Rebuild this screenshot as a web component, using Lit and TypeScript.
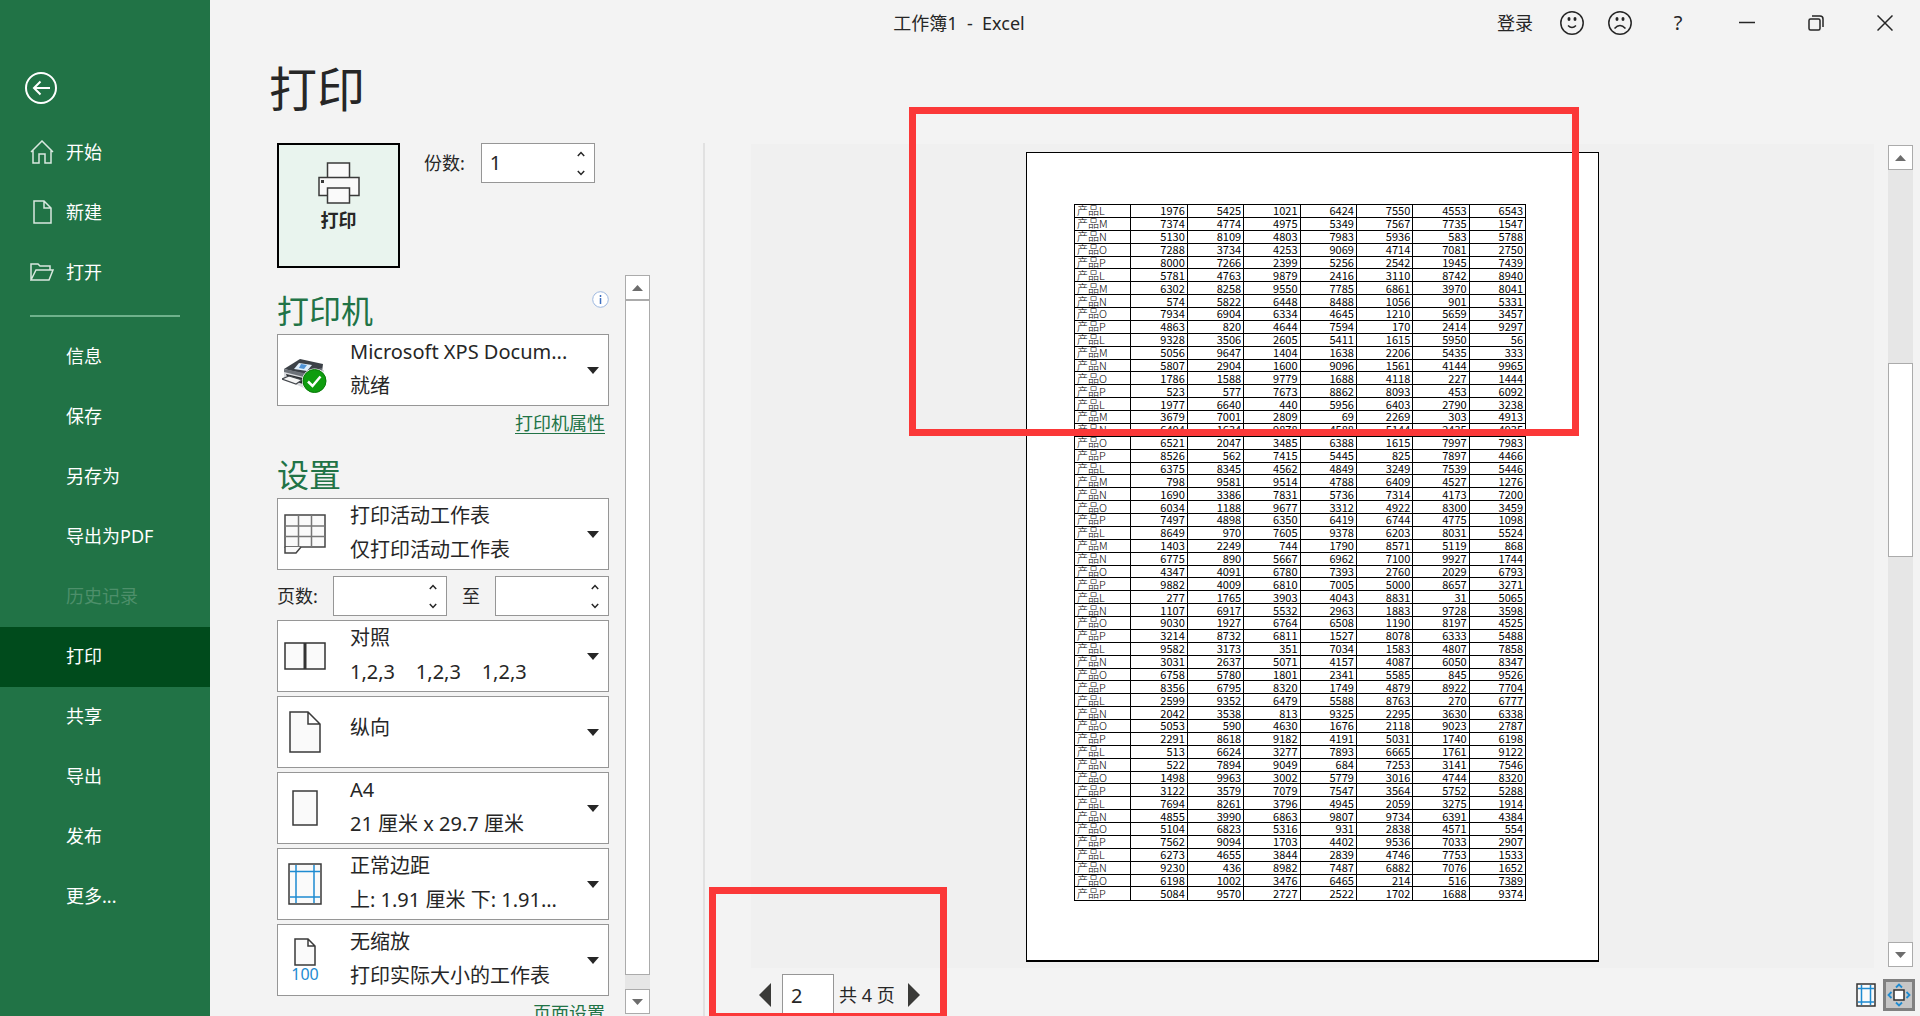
import { LitElement, html, svg, css, nothing, type TemplateResult } from "lit";
import { customElement, property } from "lit/decorators.js";
import { classMap } from "lit/directives/class-map.js";

const SHEET = `
L 1976 5425 1021 6424 7550 4553 6543
M 7374 4774 4975 5349 7567 7735 1547
N 5130 8109 4803 7983 5936 583 5788
O 7288 3734 4253 9069 4714 7081 2750
P 8000 7266 2399 5256 2542 1945 7439
L 5781 4763 9879 2416 3110 8742 8940
M 6302 8258 9550 7785 6861 3970 8041
N 574 5822 6448 8488 1056 901 5331
O 7934 6904 6334 4645 1210 5659 3457
P 4863 820 4644 7594 170 2414 9297
L 9328 3506 2605 5411 1615 5950 56
M 5056 9647 1404 1638 2206 5435 333
N 5807 2904 1600 9096 1561 4144 9965
O 1786 1588 9779 1688 4118 227 1444
P 523 577 7673 8862 8093 453 6092
L 1977 6640 440 5956 6403 2790 3238
M 3679 7001 2809 69 2269 303 4913
N 6404 1634 9878 4588 5144 2435 4935
O 6521 2047 3485 6388 1615 7997 7983
P 8526 562 7415 5445 825 7897 4466
L 6375 8345 4562 4849 3249 7539 5446
M 798 9581 9514 4788 6409 4527 1276
N 1690 3386 7831 5736 7314 4173 7200
O 6034 1188 9677 3312 4922 8300 3459
P 7497 4898 6350 6419 6744 4775 1098
L 8649 970 7605 9378 6203 8031 5524
M 1403 2249 744 1790 8571 5119 868
N 6775 890 5667 6962 7100 9927 1744
O 4347 4091 6780 7393 2760 2029 6793
P 9882 4009 6810 7005 5000 8657 3271
L 277 1765 3903 4043 8831 31 5065
N 1107 6917 5532 2963 1883 9728 3598
O 9030 1927 6764 6508 1190 8197 4525
P 3214 8732 6811 1527 8078 6333 5488
L 9582 3173 351 7034 1583 4807 7858
N 3031 2637 5071 4157 4087 6050 8347
O 6758 5780 1801 2341 5585 845 9526
P 8356 6795 8320 1749 4879 8922 7704
L 2599 9352 6479 5588 8763 270 6777
N 2042 3538 813 9325 2295 3630 6338
O 5053 590 4630 1676 2118 9023 2787
P 2291 8618 9182 4191 5031 1740 6198
L 513 6624 3277 7893 6665 1761 9122
N 522 7894 9049 684 7253 3141 7546
O 1498 9963 3002 5779 3016 4744 8320
P 3122 3579 7079 7547 3564 5752 5288
L 7694 8261 3796 4945 2059 3275 1914
N 4855 3990 6863 9807 9734 6391 4384
O 5104 6823 5316 931 2838 4571 554
P 7562 9094 1703 4402 9536 7033 2907
L 6273 4655 3844 2839 4746 7753 1533
N 9230 436 8982 7487 6882 7076 1652
O 6198 1002 3476 6465 214 516 7389
P 5084 9570 2727 2522 1702 1688 9374`
  .trim()
  .split("\n")
  .map((line) => line.split(" "));

const icon = (w: number, h: number, body: TemplateResult) =>
  html`<svg width=${w} height=${h} viewBox="0 0 ${w} ${h}" fill="none" aria-hidden="true">${body}</svg>`;

const icons = {
  back: icon(32, 32, svg`<g stroke="#fff" stroke-width="2"><circle cx="16" cy="16" r="15"/><path d="M25 16H9M15.500 9.500L9 16l6.500 6.500"/></g>`),
  home: icon(24, 24, svg`<path d="M1 12L12 1l11 11M3 10v13h6v-9h6v9h6V10" stroke="#d9e8df" stroke-width="1.500"/>`),
  file: icon(24, 24, svg`<path d="M4 1h10l7 7v15H4zM14 1v7h7" stroke="#d9e8df" stroke-width="1.500"/>`),
  folder: icon(24, 24, svg`<path d="M1 20V4h7l2 2h10v4M1 20L6 10h17l-4 10z" stroke="#d9e8df" stroke-width="1.500"/>`),
  smile: icon(24, 24, svg`<circle cx="12" cy="12" r="11.200" stroke="#262626" stroke-width="1.500"/><g fill="#262626"><ellipse cx="9" cy="8" rx="1.500" ry="2"/><ellipse cx="15" cy="8" rx="1.500" ry="2"/></g><path d="M8 14.500q4 4 8 0" stroke="#262626" stroke-width="1.500"/>`),
  frown: icon(24, 24, svg`<circle cx="12" cy="12" r="11.200" stroke="#262626" stroke-width="1.500"/><g fill="#262626"><ellipse cx="9" cy="8" rx="1.500" ry="2"/><ellipse cx="15" cy="8" rx="1.500" ry="2"/></g><path d="M6.500 17.500q5.500-6 11 0" stroke="#262626" stroke-width="1.500"/>`),
  minimize: icon(16, 16, svg`<path d="M0 7.500h16" stroke="#262626" stroke-width="1.500"/>`),
  restore: icon(16, 16, svg`<g stroke="#262626" stroke-width="1.500"><rect x="1" y="4" width="11" height="11" rx="1.500"/><path d="M4 1h8q3 0 3 3v8"/></g>`),
  close: icon(16, 16, svg`<path d="M.5.5l15 15M15.500.5l-15 15" stroke="#262626" stroke-width="1.500"/>`),
  print: icon(42, 42, svg`<g stroke="#3a3a3a" stroke-width="1.500" fill="#fafafa"><path d="M9.500 1h22v15h-22z"/><path d="M1 15.500h40v18H1z"/><path d="M9.500 26h22v15h-22z"/></g><path d="M3 18h3v3H3z" fill="#3a3a3a"/>`),
  info: icon(17, 17, svg`<circle cx="8.500" cy="8.500" r="7.800" fill="#fff" stroke="#9db8e0"/><path d="M8.500 7v6M8.500 4v2" stroke="#3f6fc0" stroke-width="1.500"/>`),
  device: icon(46, 50, svg`<g transform="translate(0 13)"><path d="M2 12l40 0v11L24 31 2 21z" fill="#d8dadd"/><path d="M2 11L18 1l23 5-1 8-17 2z" fill="#3c4147"/><path d="M2 11l20 4 18-5v3l-18 6L2 14z" fill="#6c7178"/><path d="M17 5l13 2-5 6-13-2z" fill="#dfeefb"/><path d="M19 6l6 1-3 4-5-1z" fill="#4f93d6"/><path d="M4 16l17 4v6L6 21z" fill="#25282c"/><path d="M7 18L0 21l14 5 6-4z" fill="#f5f5f5" stroke="#44484d" stroke-width="1.200"/><circle cx="32.500" cy="23" r="12.500" fill="#fff"/><circle cx="32.500" cy="23" r="11.500" fill="#0f9d0f" stroke="#087a08"/><path d="M26 23.500l4.500 4.500 8-9.500" stroke="#fff" stroke-width="2.500"/></g>`),
  sheet: icon(42, 40, svg`<path d="M1 1h40v32H1z" fill="#fafafa" stroke="#444" stroke-width="1.500"/><path d="M14.500 1v32M27.500 1v32M1 12h40M1 22.500h40" stroke="#777" stroke-width="1.500"/><path d="M1 33v6h11l5-6" fill="#fafafa" stroke="#444" stroke-width="1.500"/>`),
  collate: icon(42, 28, svg`<path d="M1 1h40v26H1z" fill="#fafafa" stroke="#333" stroke-width="1.500"/><path d="M21 1v26" stroke="#333" stroke-width="3"/>`),
  portrait: icon(32, 42, svg`<path d="M1 1h18l12 12v28H1zM19 1v12h12" fill="#fafafa" stroke="#3a3a3a" stroke-width="1.500"/>`),
  paper: icon(26, 36, svg`<path d="M1 1h24v34H1z" fill="#fafafa" stroke="#3a3a3a" stroke-width="1.500"/>`),
  margins: icon(34, 42, svg`<path d="M1 1h32v40H1z" fill="#fafafa" stroke="#3a3a3a" stroke-width="1.500"/><path d="M8 2v38M26 2v38M2 8.500h30M2 34h30" stroke="#1e8bd1" stroke-width="1.500"/>`),
  scale: icon(22, 28, svg`<path d="M1 1h13l7 7v19H1zM14 1v7h7" fill="#fafafa" stroke="#3a3a3a" stroke-width="1.500"/>`),
  caret: icon(12, 7, svg`<path d="M0 0h12L6 7z" fill="#262626"/>`),
  up: icon(11, 6, svg`<path d="M0 6L5.500 0 11 6z" fill="#6d6d6d"/>`),
  down: icon(11, 6, svg`<path d="M0 0h11L5.500 6z" fill="#6d6d6d"/>`),
  spinUp: icon(8, 6, svg`<path d="M.8 5L4 1.500 7.200 5" stroke="#262626" stroke-width="1.500"/>`),
  spinDown: icon(8, 6, svg`<path d="M.8 1L4 4.500 7.200 1" stroke="#262626" stroke-width="1.500"/>`),
  prev: icon(12, 24, svg`<path d="M12 0v24L0 12z" fill="#3a3a38"/>`),
  next: icon(12, 24, svg`<path d="M0 0v24l12-12z" fill="#3a3a38"/>`),
  showMargins: icon(20, 24, svg`<path d="M1 1h18v22H1z" fill="#fafafa" stroke="#333" stroke-width="1.500"/><path d="M5.500 2v20M14.500 2v20M2 5.500h16M2 19h16" stroke="#1e8bd1" stroke-width="1.500"/>`),
  zoomPage: icon(24, 24, svg`<path d="M7 7h10v10H7z" fill="#fff" stroke="#333" stroke-width="1.500"/><path d="M9 4.500L12 1.500l3 3M9 19.500l3 3 3-3M4.500 9l-3 3 3 3M19.500 9l3 3-3 3" stroke="#1e8bd1" stroke-width="1.800"/>`),
};

const base = css`
  *, *::before, *::after { box-sizing: border-box; }
  button, input { font: inherit; color: inherit; margin: 0; border-radius: 0; }
  button { padding: 0; border: 0; background: none; cursor: pointer; }
  svg { display: block; flex: none; }
`;

@customElement("spin-box")
export class SpinBox extends LitElement {
  static styles = [base, css`
    :host { display: block; width: 114px; }
    .box { display: flex; height: 40px; border: 1px solid #969696; background: #fff; }
    .field { flex: 1; min-width: 0; border: 0; outline: 0; background: none; padding: 0 0 0 8px; font-size: 20px; }
    .steps { display: grid; grid-template-rows: 1fr 1fr; width: 26px; }
    .step { display: grid; place-items: center; }
  `];
  @property() label = "";
  @property() value = "";
  render() {
    return html`<div class="box">
      <input class="field" type="text" inputmode="numeric" aria-label=${this.label} .value=${this.value} />
      <span class="steps">
        <button class="step" aria-label="增加">${icons.spinUp}</button>
        <button class="step" aria-label="减少">${icons.spinDown}</button>
      </span>
    </div>`;
  }
}

@customElement("option-picker")
export class OptionPicker extends LitElement {
  static styles = [base, css`
    :host { display: block; }
    .picker { display: flex; align-items: center; width: 100%; height: 72px; border: 1px solid #969696; background: #fff; text-align: left; }
    .glyph { display: flex; flex-direction: column; align-items: center; width: 54px; flex: none; }
    .caption { color: #1e8bd1; font-size: 16px; line-height: 16px; }
    .lines { flex: 1; min-width: 0; padding: 0 0 2px 18px; font-size: 20px; line-height: 34px; }
    .line { display: block; white-space: pre; }
    .lines.single { padding-bottom: 8px; }
    .caret { padding-right: 9px; }
  `];
  @property({ attribute: false }) glyph: TemplateResult | typeof nothing = nothing;
  @property() caption = "";
  @property() name = "";
  @property() detail = "";
  render() {
    return html`<button class="picker" aria-haspopup="listbox">
      <span class="glyph">${this.glyph}${this.caption ? html`<span class="caption">${this.caption}</span>` : nothing}</span>
      <span class=${classMap({ lines: true, single: !this.detail })}>
        <span class="line">${this.name}</span>
        ${this.detail ? html`<span class="line">${this.detail}</span>` : nothing}
      </span>
      <span class="caret">${icons.caret}</span>
    </button>`;
  }
}

@customElement("scroll-rail")
export class ScrollRail extends LitElement {
  static styles = [base, css`
    :host { display: flex; flex-direction: column; width: 25px; flex: none; background: #e6e6e6; }
    .end { display: grid; place-items: center; height: 25px; flex: none; border: 1px solid #ababab; background: #fff; }
    .track { display: flex; flex-direction: column; flex: 1; }
    .thumb { border: 1px solid #ababab; background: #fff; }
  `];
  @property({ type: Number }) before = 0;
  @property({ type: Number }) size = 50;
  render() {
    return html`<button class="end" aria-label="向上滚动">${icons.up}</button>
      <div class="track">
        <div style="flex-grow:${this.before}"></div>
        <div class="thumb" style="flex-grow:${this.size}"></div>
        <div style="flex-grow:${100 - this.before - this.size}"></div>
      </div>
      <button class="end" aria-label="向下滚动">${icons.down}</button>`;
  }
}

interface NavItem { text: string; glyph?: TemplateResult; disabled?: boolean; current?: boolean; }

const primaryNav: NavItem[] = [
  { text: "开始", glyph: icons.home },
  { text: "新建", glyph: icons.file },
  { text: "打开", glyph: icons.folder },
];
const secondaryNav: NavItem[] = [
  { text: "信息" }, { text: "保存" }, { text: "另存为" }, { text: "导出为PDF" },
  { text: "历史记录", disabled: true }, { text: "打印", current: true },
  { text: "共享" }, { text: "导出" }, { text: "发布" }, { text: "更多..." },
];

@customElement("app-root")
export class AppRoot extends LitElement {
  static styles = [base, css`
    :host {
      display: grid; grid-template-columns: 210px minmax(0, 1fr); height: 100vh; overflow: hidden;
      background: #f3f3f3; color: #262626;
      font-family: "Noto Sans", "Noto Sans CJK SC", sans-serif; font-size: 18px; line-height: 24px;
    }
    .side { background: #217346; color: #fff; padding-top: 72px; overflow: hidden; }
    .back { display: block; margin: 0 0 19px 25px; }
    .nav { display: flex; align-items: center; gap: 12px; width: 100%; height: 60px; padding: 0 0 2px 66px; text-align: left; }
    .nav.with-icon { padding-left: 30px; }
    .nav.current { background: #004b1c; }
    .nav:disabled { color: #4d8f6a; cursor: default; }
    .rule { height: 2px; margin: 12px 30px 10px; border: 0; background: #6fb28c; }

    .main { display: flex; flex-direction: column; min-width: 0; height: 100vh; }
    .titlebar { display: grid; grid-template-columns: 1fr auto 1fr; align-items: center; height: 46px; flex: none; }
    .caption { grid-column: 2; white-space: pre; padding-right: 212px; }
    .tools { grid-column: 3; justify-self: end; display: flex; align-items: center; padding-right: 27px; }
    .tools button { display: grid; place-items: center; height: 32px; }
    .login { margin-right: 27px; }
    .face { width: 24px; margin-right: 24px; }
    .help { width: 20px; margin-left: 12px; margin-right: 51px; font-size: 20px; }
    .window { width: 16px; margin-left: 53px; }
    .window.first { margin-left: 0; }
    .title { margin: 0; padding: 11px 0 22px 59px; font-size: 48px; line-height: 64px; font-weight: 400; flex: none; }

    .body { display: flex; flex: 1; min-height: 0; }
    .settings { display: flex; flex-direction: column; width: 495px; flex: none; padding-left: 67px; border-right: 2px solid #e1e1e1; }
    .job { display: flex; gap: 24px; flex: none; }
    .print { display: flex; flex-direction: column; align-items: center; gap: 4px; width: 123px; height: 125px; padding-top: 17px; border: 2px solid #000; background: #e9f4ee; font-weight: 700; }
    .copies { display: flex; align-items: center; gap: 16px; height: 40px; }
    .scroller { display: flex; gap: 16px; flex: 1; min-height: 0; padding: 7px 0 2px; }
    .clip { margin-bottom: -2px; overflow: hidden; }
    .form { width: 332px; padding-top: 16px; }
    .heading { display: flex; justify-content: space-between; align-items: flex-start; margin-bottom: 3px; }
    .heading h2 { margin: 0; color: #217346; font-size: 32px; line-height: 40px; font-weight: 400; }
    .more { display: block; width: fit-content; margin: 5px 4px 20px auto; color: #217346; text-underline-offset: 3px; text-decoration-thickness: 1px; }
    .stack { display: grid; gap: 4px; }
    .range { display: flex; align-items: center; justify-content: space-between; padding-top: 2px; }

    .preview { display: flex; flex-direction: column; flex: 1; min-width: 0; }
    .viewer { display: flex; gap: 14px; flex: 1; min-height: 0; padding: 1px 7px 0 46px; }
    .canvas { display: flex; justify-content: center; flex: 1; min-width: 0; padding: 8px 0 6px; background: #f0f0f0; }
    .rail { margin: 1px 0; }
    .page { position: relative; height: 100%; aspect-ratio: 573 / 810; padding: 51px 72px 59px 47px; border: 1px solid #000; border-bottom-width: 2px; background: #fff; }
    .sheet { width: 100%; height: 100%; border-collapse: collapse; table-layout: fixed; color: #000;
      font-family: "Noto Sans CJK SC", sans-serif; font-size: 11px; line-height: 11px; }
    .sheet td, .sheet th { padding: 0 2px; border: 1px solid #000; font-weight: 400; text-align: right; white-space: nowrap; }
    .sheet th { text-align: left; font-weight: 300; }
    .mark { position: absolute; z-index: 2; border: 7px solid #fb3838; pointer-events: none; }
    .mark.on-page { left: -118px; top: -46px; width: 670px; height: 329px; }
    .mark.on-pager { left: 4px; top: -81px; width: 238px; height: 133px; }

    .status { position: relative; display: flex; align-items: center; height: 48px; flex: none; padding: 6px 5px 0 54px; }
    .page-number { width: 52px; height: 42px; margin: 0 5px 0 11px; padding: 0 0 0 8px; border: 1px solid #969696; background: #fff; font-size: 20px; align-self: flex-start; }
    .next { margin-left: 13px; }
    .view { display: flex; align-items: center; gap: 7px; margin-left: auto; }
    .zoom { display: grid; place-items: center; width: 32px; height: 32px; border: 3px solid #808080; background: #c6c6c6; }
  `];

  private nav(item: NavItem) {
    return html`<button class=${classMap({ nav: true, "with-icon": !!item.glyph, current: !!item.current })}
      ?disabled=${item.disabled} aria-current=${item.current ? "page" : nothing}>${item.glyph ?? nothing}${item.text}</button>`;
  }

  private picker(glyph: TemplateResult, name: string, detail = "", caption = "") {
    return html`<option-picker .glyph=${glyph} .name=${name} .detail=${detail} .caption=${caption}></option-picker>`;
  }

  render() {
    return html`
      <nav class="side">
        <button class="back" aria-label="返回">${icons.back}</button>
        ${primaryNav.map((i) => this.nav(i))}
        <hr class="rule" />
        ${secondaryNav.map((i) => this.nav(i))}
      </nav>
      <main class="main">
        <header class="titlebar">
          <span class="caption">工作簿1  -  Excel</span>
          <div class="tools">
            <button class="login">登录</button>
            <button class="face" aria-label="微笑">${icons.smile}</button>
            <button class="face" aria-label="哭脸">${icons.frown}</button>
            <button class="help" aria-label="帮助">?</button>
            <button class="window first" aria-label="最小化">${icons.minimize}</button>
            <button class="window" aria-label="还原">${icons.restore}</button>
            <button class="window" aria-label="关闭">${icons.close}</button>
          </div>
        </header>
        <h1 class="title">打印</h1>
        <div class="body">
          <section class="settings">
            <div class="job">
              <button class="print">${icons.print}<span>打印</span></button>
              <div class="copies"><span>份数:</span><spin-box label="份数" value="1"></spin-box></div>
            </div>
            <div class="scroller">
              <div class="clip">
                <div class="form">
                  <div class="heading"><h2>打印机</h2>${icons.info}</div>
                  ${this.picker(icons.device, "Microsoft XPS Docum...", "就绪")}
                  <a class="more" href="#printer">打印机属性</a>
                  <div class="heading"><h2>设置</h2></div>
                  <div class="stack">
                    ${this.picker(icons.sheet, "打印活动工作表", "仅打印活动工作表")}
                    <div class="range">
                      <span>页数:</span><spin-box label="起始页"></spin-box>
                      <span>至</span><spin-box label="结束页"></spin-box>
                    </div>
                    ${this.picker(icons.collate, "对照", "1,2,3    1,2,3    1,2,3")}
                    ${this.picker(icons.portrait, "纵向")}
                    ${this.picker(icons.paper, "A4", "21 厘米 x 29.7 厘米")}
                    ${this.picker(icons.margins, "正常边距", "上: 1.91 厘米 下: 1.91...")}
                    ${this.picker(icons.scale, "无缩放", "打印实际大小的工作表", "100")}
                  </div>
                  <a class="more" href="#page-setup">页面设置</a>
                </div>
              </div>
              <scroll-rail .before=${0} .size=${98}></scroll-rail>
            </div>
          </section>
          <section class="preview">
            <div class="viewer">
              <div class="canvas">
                <div class="page">
                  <table class="sheet">
                    <tbody>
                      ${SHEET.map(([name, ...values]) => html`<tr><th scope="row">产品${name}</th>${values.map((v) => html`<td>${v}</td>`)}</tr>`)}
                    </tbody>
                  </table>
                  <div class="mark on-page"></div>
                </div>
              </div>
              <scroll-rail class="rail" .before=${25} .size=${25}></scroll-rail>
            </div>
            <footer class="status">
              <button class="prev" aria-label="上一页">${icons.prev}</button>
              <input class="page-number" type="text" aria-label="当前页" value="2" />
              <span>共 4 页</span>
              <button class="next" aria-label="下一页">${icons.next}</button>
              <div class="view">
                <button aria-label="显示边距">${icons.showMargins}</button>
                <button class="zoom" aria-label="缩放到页面">${icons.zoomPage}</button>
              </div>
              <div class="mark on-pager"></div>
            </footer>
          </section>
        </div>
      </main>`;
  }
}
